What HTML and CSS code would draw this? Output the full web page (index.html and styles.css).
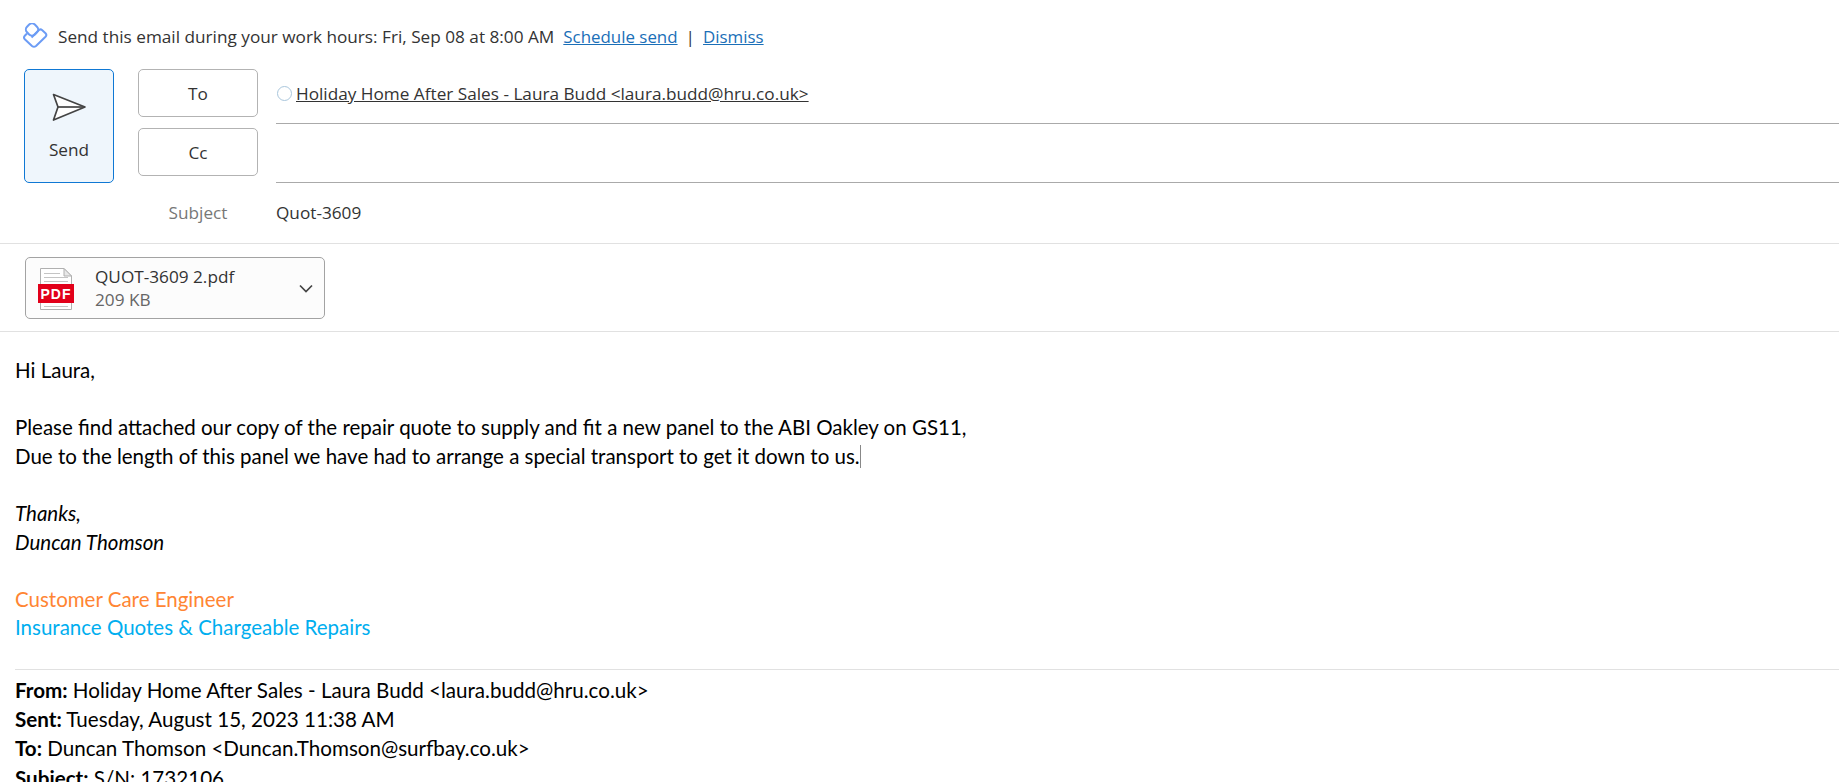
FILE: index.html
```html
<!DOCTYPE html>
<html lang="en">
<head>
    <meta charset="UTF-8">
    <title>Quot-3609</title>
    <link rel="stylesheet" href="styles.css">
</head>
<body>
    <div class="compose">
        <div class="hint">
            <svg class="hint-icon" width="26" height="26" viewBox="0 0 26 26" fill="none" stroke="#6c9cf5" stroke-width="2" stroke-linejoin="round">
                <rect x="4.500" y="1" width="11" height="11" rx="4" transform="rotate(45 10 6.500)"/>
                <path d="M5 10.500 L2.800 12.800 Q1.200 14.500 2.800 16.200 L10 23 Q12 24.600 14 23 L23.500 13.800 Q25.200 12 23.500 10.200 L20 7 Q18.500 5.800 17 7 L9.500 14.500"/>
            </svg>
            <span>Send this email during your work hours: Fri, Sep 08 at 8:00 AM</span>
            <a class="hint-link" href="#">Schedule send</a>
            <span class="hint-sep">|</span>
            <a href="#">Dismiss</a>
        </div>

        <div class="head">
            <button class="send-btn">
                <svg width="36" height="30" viewBox="0 0 36 30" fill="#fff" stroke="#444" stroke-width="1.700" stroke-linejoin="round">
                    <path d="M2.500 2.500 L34 15 L2.500 28 L7 15 Z"/>
                    <path d="M7 15 H34" fill="none"/>
                </svg>
                <span>Send</span>
            </button>
            <div class="recipients">
                <div class="recipient-row">
                    <button class="field-btn">To</button>
                    <div class="field-value">
                        <span class="presence"></span>
                        <a class="address" href="#">Holiday Home After Sales - Laura Budd &lt;laura.budd@hru.co.uk&gt;</a>
                    </div>
                </div>
                <div class="recipient-row">
                    <button class="field-btn">Cc</button>
                    <div class="field-value"></div>
                </div>
                <div class="subject-row">
                    <span class="subject-label">Subject</span>
                    <span class="subject-value">Quot-3609</span>
                </div>
            </div>
        </div>

        <div class="attachments">
            <div class="attachment">
                <svg class="pdf-icon" width="38" height="46" viewBox="0 0 38 46">
                    <path d="M2.500 3.500 H26 L33.500 11 V44.500 H2.500 Z" fill="#fff" stroke="#b0b0b0"/>
                    <path d="M26 3.500 V11 H33.500 Z" fill="#e8e8e8" stroke="#b0b0b0"/>
                    <path d="M6 8.500 H22 M6 12.500 H30 M6 16.500 H30 M6 41.500 H30" stroke="#c4c4c4"/>
                    <rect x="0" y="19" width="36" height="19" fill="#e2001a"/>
                    <text x="18" y="33.500" class="pdf-text">PDF</text>
                </svg>
                <div class="file-info">
                    <div class="file-name">QUOT-3609 2.pdf</div>
                    <div class="file-size">209 KB</div>
                </div>
                <svg class="chevron" width="14" height="9" viewBox="0 0 14 9" fill="none" stroke="#444" stroke-width="1.700">
                    <path d="M1 1.500 L7 7.500 L13 1.500"/>
                </svg>
            </div>
        </div>

        <div class="message">
            <p>Hi Laura,</p>
            <p class="blank">&nbsp;</p>
            <p>Please find attached our copy of the repair quote to supply and fit a new panel to the ABI Oakley on GS11,</p>
            <p>Due to the length of this panel we have had to arrange a special transport to get it down to us.<span class="caret"></span></p>
            <p class="blank">&nbsp;</p>
            <p><em>Thanks,</em></p>
            <p><em>Duncan Thomson</em></p>
            <p class="blank">&nbsp;</p>
            <p class="role">Customer Care Engineer</p>
            <p class="dept">Insurance Quotes &amp; Chargeable Repairs</p>
            <div class="quoted">
                <p><b>From:</b> Holiday Home After Sales - Laura Budd &lt;laura.budd@hru.co.uk&gt;</p>
                <p><b>Sent:</b> Tuesday, August 15, 2023 11:38 AM</p>
                <p><b>To:</b> Duncan Thomson &lt;Duncan.Thomson@surfbay.co.uk&gt;</p>
                <p><b>Subject:</b> S/N: 1732106</p>
            </div>
        </div>
    </div>
</body>
</html>
```

FILE: styles.css
```css
html, body {
    margin: 0;
    height: 782px;
    overflow: hidden;
    background-color: #fff;
}

body {
    font-family: 'Open Sans', 'Noto Sans', sans-serif;
    font-size: 17.2px;
    color: #333;
}

.hint {
    display: flex;
    align-items: center;
    height: 24px;
    padding: 24px 0 0 22px;
    color: #333;
}

.hint-icon {
    margin-right: 10px;
}

.hint a {
    color: #1a6fb8;
    font-size: 16.9px;
}

.hint-link {
    margin-left: 9px;
}

.hint-sep {
    margin: 0 8px;
}

.head {
    display: flex;
    padding: 21px 0 0 24px;
}

.send-btn {
    width: 90px;
    height: 114px;
    flex: none;
    background-color: #eff6fc;
    border: 1px solid #0f78d4;
    border-radius: 5px;
    font: inherit;
    color: #333;
    display: flex;
    flex-direction: column;
    align-items: center;
    padding: 22px 0 0;
    gap: 16px;
}

.recipients {
    flex: 1;
    margin-left: 24px;
}

.recipient-row {
    display: flex;
    height: 59px;
}

.field-btn {
    width: 120px;
    height: 48px;
    flex: none;
    background-color: #fff;
    border: 1px solid #b3b3b3;
    border-radius: 5px;
    font: inherit;
    color: #333;
}

.field-value {
    flex: 1;
    margin-left: 18px;
    height: 48px;
    padding-bottom: 6px;
    border-bottom: 1px solid #aaa;
    display: flex;
    align-items: center;
}

.presence {
    width: 13px;
    height: 13px;
    border: 1px solid #a9c6dc;
    border-radius: 50%;
    margin: 0 4px 0 1px;
}

.address {
    color: #333;
    text-decoration: underline;
}

.subject-row {
    display: flex;
    align-items: center;
    height: 29px;
    margin-top: 11px;
}

.subject-label {
    width: 120px;
    text-align: center;
    color: #777;
}

.subject-value {
    margin-left: 18px;
}

.attachments {
    margin-top: 16px;
    padding: 13px 0 12px 25px;
    border-top: 1px solid #e1e1e1;
    border-bottom: 1px solid #e1e1e1;
}

.attachment {
    width: 298px;
    height: 60px;
    background-color: #fcfcfc;
    border: 1px solid #a3a3a3;
    border-radius: 5px;
    display: flex;
    align-items: center;
}

.pdf-icon {
    margin-left: 12px;
}

.pdf-text {
    font-family: 'Liberation Sans', sans-serif;
    font-size: 14px;
    font-weight: bold;
    letter-spacing: 1px;
    fill: #fff;
    text-anchor: middle;
}

.file-info {
    flex: 1;
    margin-left: 19px;
    line-height: 23px;
}

.file-size {
    color: #666;
}

.chevron {
    margin-right: 11px;
}

.message {
    padding: 24px 0 0 15px;
    font-family: 'Lato', 'Open Sans', sans-serif;
    font-size: 20.5px;
    color: #000;
    line-height: 28.6px;
}

.message p {
    margin: 0;
}

.caret {
    display: inline-block;
    width: 1px;
    height: 23px;
    background-color: #888;
    vertical-align: text-bottom;
}

.role {
    color: #ff8533;
}

.dept {
    color: #00aeef;
}

.quoted {
    margin-top: 27px;
    padding-top: 6px;
    border-top: 1px solid #e1e1e1;
    font-size: 20.6px;
    line-height: 29.2px;
}
```
